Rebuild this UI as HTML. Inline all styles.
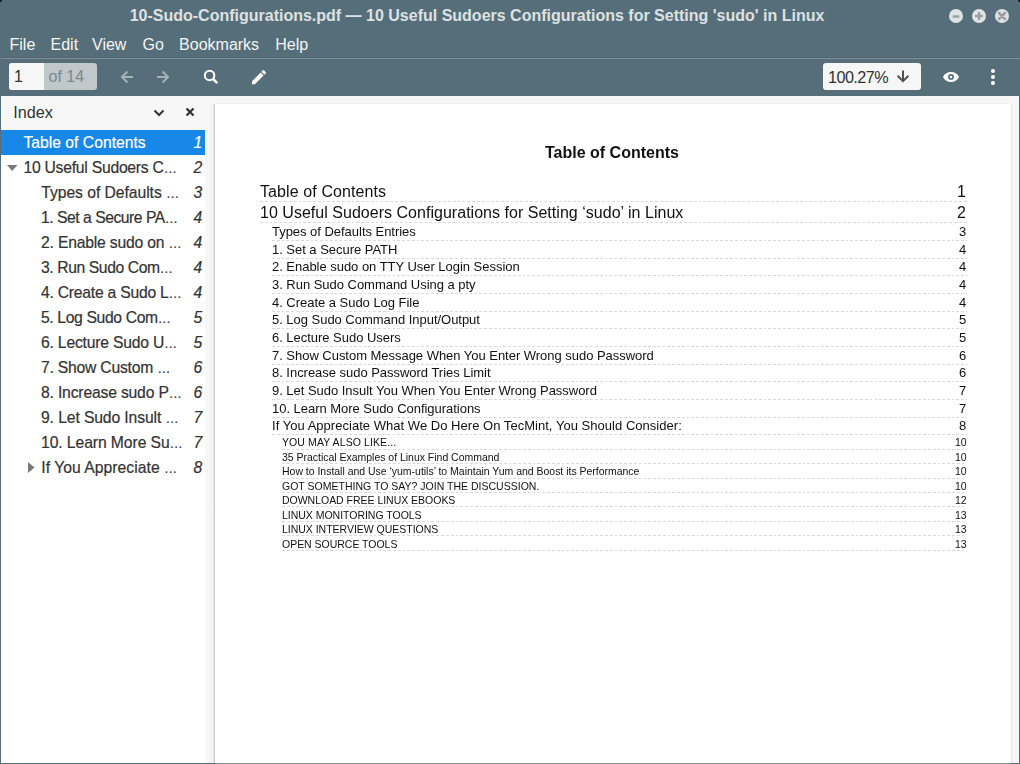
<!DOCTYPE html>
<html><head><meta charset="utf-8">
<style>
*{margin:0;padding:0;box-sizing:border-box}
html,body{width:1020px;height:764px;overflow:hidden}
body{background:#566e79;font-family:"Liberation Sans",sans-serif;position:relative}
.a{position:absolute;white-space:nowrap}
#title{left:0;width:954px;text-align:center;font-weight:bold;font-size:16px;color:#dde1e3;line-height:20px}
.wb{position:absolute;top:9px;width:14px;height:14px;border-radius:50%;background:#dfe2e4}
.wb svg{position:absolute;left:0;top:0}
.menu{font-size:16px;color:#f4f5f5;line-height:20px}
#sep{left:1px;top:58px;width:1018px;height:1px;background:#7d909a}
#sep0{left:1px;top:57px;width:1018px;height:1px;background:#4f646e}
#pe{left:9px;top:63px;width:88px;height:27px;border-radius:3px;background:#c0c8cb;overflow:hidden}
#pe1{left:0;top:0;width:35px;height:27px;background:#f6f6f6}
#zoom{left:823px;top:63px;width:98px;height:27px;border-radius:3px;background:#f6f6f6}
#side{left:1px;top:96px;width:204px;height:667px;background:#fff;overflow:hidden}
#shead{left:0;top:0;width:204px;height:34px;background:#f7f7f7}
#sel{left:0;top:34px;width:204px;height:25px;background:#1787e8}
.st{font-size:15.7px;line-height:20px;color:#333;-webkit-text-stroke:0.2px currentColor}
.sn{font-size:15.7px;line-height:20px;color:#333;font-style:italic;-webkit-text-stroke:0.2px currentColor}
#docbg{left:205px;top:96px;width:814px;height:667px;background:#f7f7f7}
#strip{left:205px;top:104px;width:9px;height:659px;background:linear-gradient(to right,#f9f9f9,#f1f1f1)}
#page{left:215px;top:104px;width:796px;height:659px;background:#fff;box-shadow:-1px 0 1px #c8c8c8, 1px 0 1px #e6e6e6}
.e{position:absolute;color:#111;white-space:nowrap;will-change:transform}
.d{position:absolute;height:1px;background:repeating-linear-gradient(to right,#dadada 0,#dadada 2.8px,transparent 2.8px,transparent 4.82px)}
</style></head><body>
<div class="a" id="title" style="top:6.06px">10-Sudo-Configurations.pdf — 10 Useful Sudoers Configurations for Setting 'sudo' in Linux</div>
<div class="wb" style="left:949px"><svg width="14" height="14" viewBox="0 0 14 14"><rect x="3.7" y="6.3" width="6.6" height="2.4" fill="#9c9fa1"/></svg></div>
<div class="wb" style="left:972px"><svg width="14" height="14" viewBox="0 0 14 14"><rect x="3.1" y="5.8" width="7.8" height="2.4" fill="#9c9fa1"/><rect x="5.8" y="3.1" width="2.4" height="7.8" fill="#9c9fa1"/></svg></div>
<div class="wb" style="left:995px"><svg width="14" height="14" viewBox="0 0 14 14"><path d="M4 4L10 10M10 4L4 10" stroke="#9c9fa1" stroke-width="2.6" stroke-linecap="round"/></svg></div>
<div class="a menu" style="left:9.5px;top:34.66px">File</div>
<div class="a menu" style="left:50.5px;top:34.66px">Edit</div>
<div class="a menu" style="left:92px;top:34.66px">View</div>
<div class="a menu" style="left:142.6px;top:34.66px">Go</div>
<div class="a menu" style="left:179.1px;top:34.66px">Bookmarks</div>
<div class="a menu" style="left:275.3px;top:34.66px">Help</div>
<div class="a" id="sep0"></div><div class="a" id="sep"></div>
<div class="a" style="left:-1px;top:-1px;width:3px;height:3px;border-radius:50%;background:#1a1a2a"></div><div class="a" style="left:1018px;top:-1px;width:3px;height:3px;border-radius:50%;background:#1a1a2a"></div>
<div class="a" id="pe"><div class="a" id="pe1"></div></div>
<div class="a" style="left:14px;top:67.26px;font-size:16px;line-height:20px;color:#333">1</div>
<div class="a" style="left:48.5px;top:67.26px;font-size:16px;line-height:20px;color:#7c878c">of 14</div>
<svg class="a" style="left:115px;top:65px" width="60" height="25" viewBox="115 65 60 25"><path d="M133 77H122.2M127.4 71.6L122 77L127.4 82.4M157 77H167.8M162.6 71.6L168 77L162.6 82.4" stroke="#a5b1b7" stroke-width="2.1" fill="none"/></svg>
<svg class="a" style="left:198px;top:65px" width="74" height="25" viewBox="198 65 74 25"><circle cx="209.6" cy="75.5" r="4.75" stroke="#fff" stroke-width="2.1" fill="none"/><path d="M212.8 78.7L217.3 83.2" stroke="#fff" stroke-width="2.4" fill="none"/><g transform="translate(249.66 67.76) scale(0.78)"><path d="M3 17.25V21h3.75L17.81 9.94l-3.75-3.750L3 17.25zM20.71 7.04c.39-.39.39-1.02 0-1.41l-2.34-2.34c-.39-.39-1.02-.39-1.41 0l-1.83 1.83 3.75 3.75 1.83-1.83z" fill="#fff"/></g></svg>
<div class="a" id="zoom"></div>
<div class="a" style="left:828px;top:66.99px;font-size:16.2px;line-height:20px;color:#333;letter-spacing:-0.55px">100.27%</div>
<svg class="a" style="left:890px;top:65px" width="130" height="25" viewBox="890 65 130 25"><path d="M903 70.5V81M897.6 75.8L903 81.2L908.4 75.8" stroke="#505050" stroke-width="2" fill="none"/><path d="M943 77C946 70.3 956 70.3 959 77C956 83.7 946 83.7 943 77Z" fill="#fff"/><circle cx="951" cy="76.9" r="2.1" stroke="#566e79" stroke-width="1.7" fill="none"/><circle cx="993" cy="71" r="2.05" fill="#fff"/><circle cx="993" cy="77" r="2.05" fill="#fff"/><circle cx="993" cy="83" r="2.05" fill="#fff"/></svg>
<div class="a" id="side"><div class="a" id="shead"></div><div class="a" style="left:12.2px;top:6.39px;font-size:16.2px;line-height:20px;color:#333">Index</div><svg class="a" style="left:151.5px;top:12.5px" width="12" height="8" viewBox="0 0 12 8"><path d="M1.5 1.5L6 6L10.5 1.5" stroke="#333" stroke-width="2" fill="none"/></svg><svg class="a" style="left:184px;top:11px" width="10" height="10" viewBox="0 0 10 10"><path d="M1.5 1.5L8.5 8.5M8.5 1.5L1.5 8.5" stroke="#333" stroke-width="2.2" fill="none"/></svg><div class="a" id="sel"></div><div class="a st" style="left:22.40px;top:36.96px;letter-spacing:0.013px;color:#fff">Table of Contents</div><div class="a sn" style="left:192.60px;top:36.96px;color:#fff">1</div><div class="a st" style="left:22.40px;top:61.96px;letter-spacing:-0.235px;color:#333">10 Useful Sudoers C<span style="font-size:13.2px;letter-spacing:0">…</span></div><div class="a sn" style="left:192.60px;top:61.96px;color:#333">2</div><div class="a st" style="left:40.30px;top:86.96px;letter-spacing:-0.048px;color:#333">Types of Defaults <span style="font-size:13.2px;letter-spacing:0">…</span></div><div class="a sn" style="left:192.60px;top:86.96px;color:#333">3</div><div class="a st" style="left:40.00px;top:111.96px;letter-spacing:-0.475px;color:#333">1. Set a Secure PA<span style="font-size:13.2px;letter-spacing:0">…</span></div><div class="a sn" style="left:192.60px;top:111.96px;color:#333">4</div><div class="a st" style="left:40.00px;top:136.96px;letter-spacing:-0.185px;color:#333">2. Enable sudo on <span style="font-size:13.2px;letter-spacing:0">…</span></div><div class="a sn" style="left:192.60px;top:136.96px;color:#333">4</div><div class="a st" style="left:40.00px;top:161.96px;letter-spacing:-0.399px;color:#333">3. Run Sudo Com<span style="font-size:13.2px;letter-spacing:0">…</span></div><div class="a sn" style="left:192.60px;top:161.96px;color:#333">4</div><div class="a st" style="left:40.00px;top:186.96px;letter-spacing:-0.233px;color:#333">4. Create a Sudo L<span style="font-size:13.2px;letter-spacing:0">…</span></div><div class="a sn" style="left:192.60px;top:186.96px;color:#333">4</div><div class="a st" style="left:40.00px;top:211.96px;letter-spacing:-0.359px;color:#333">5. Log Sudo Com<span style="font-size:13.2px;letter-spacing:0">…</span></div><div class="a sn" style="left:192.60px;top:211.96px;color:#333">5</div><div class="a st" style="left:40.00px;top:236.96px;letter-spacing:-0.197px;color:#333">6. Lecture Sudo U<span style="font-size:13.2px;letter-spacing:0">…</span></div><div class="a sn" style="left:192.60px;top:236.96px;color:#333">5</div><div class="a st" style="left:40.00px;top:261.96px;letter-spacing:-0.216px;color:#333">7. Show Custom <span style="font-size:13.2px;letter-spacing:0">…</span></div><div class="a sn" style="left:192.60px;top:261.96px;color:#333">6</div><div class="a st" style="left:40.00px;top:286.96px;letter-spacing:-0.173px;color:#333">8. Increase sudo P<span style="font-size:13.2px;letter-spacing:0">…</span></div><div class="a sn" style="left:192.60px;top:286.96px;color:#333">6</div><div class="a st" style="left:40.00px;top:311.96px;letter-spacing:-0.103px;color:#333">9. Let Sudo Insult <span style="font-size:13.2px;letter-spacing:0">…</span></div><div class="a sn" style="left:192.60px;top:311.96px;color:#333">7</div><div class="a st" style="left:40.00px;top:336.96px;letter-spacing:-0.078px;color:#333">10. Learn More Su<span style="font-size:13.2px;letter-spacing:0">…</span></div><div class="a sn" style="left:192.60px;top:336.96px;color:#333">7</div><div class="a st" style="left:40.30px;top:361.96px;letter-spacing:0.038px;color:#333">If You Appreciate <span style="font-size:13.2px;letter-spacing:0">…</span></div><div class="a sn" style="left:192.60px;top:361.96px;color:#333">8</div><svg class="a" style="left:5.6px;top:69.2px" width="11" height="7" viewBox="0 0 11 7"><path d="M0 0H10.4L5.2 6.1z" fill="#7a7a7a"/></svg><svg class="a" style="left:26.5px;top:365.5px" width="7" height="11" viewBox="0 0 7 11"><path d="M0 0V11L6.5 5.5z" fill="#7a7a7a"/></svg></div>
<div class="a" id="docbg"></div><div class="a" id="strip"></div>
<div class="a" id="page"></div>
<div class="e" style="left:545.30px;top:143.26px;font-size:16px;line-height:20px;font-weight:bold;letter-spacing:0px">Table of Contents</div>
<div class="e" style="left:259.60px;top:181.66px;font-size:16px;line-height:20px;letter-spacing:0.1px">Table of Contents</div>
<div class="e" style="left:956.60px;top:181.66px;font-size:16px;line-height:20px;letter-spacing:0px">1</div>
<div class="d" style="left:259.50px;top:201.00px;width:707.00px"></div>
<div class="e" style="left:259.60px;top:203.36px;font-size:16px;line-height:20px;letter-spacing:0.025px">10 Useful Sudoers Configurations for Setting ‘sudo’ in Linux</div>
<div class="e" style="left:956.60px;top:203.36px;font-size:16px;line-height:20px;letter-spacing:0px">2</div>
<div class="d" style="left:259.50px;top:222.00px;width:707.00px"></div>
<div class="e" style="left:272.30px;top:222.20px;font-size:13px;line-height:20px;letter-spacing:-0.03px">Types of Defaults Entries</div>
<div class="e" style="left:958.87px;top:222.20px;font-size:13px;line-height:20px;letter-spacing:0px">3</div>
<div class="d" style="left:272.00px;top:240.00px;width:694.50px"></div>
<div class="e" style="left:272.30px;top:239.84px;font-size:13px;line-height:20px;letter-spacing:-0.03px">1. Set a Secure PATH</div>
<div class="e" style="left:958.87px;top:239.84px;font-size:13px;line-height:20px;letter-spacing:0px">4</div>
<div class="d" style="left:272.00px;top:258.00px;width:694.50px"></div>
<div class="e" style="left:272.30px;top:257.48px;font-size:13px;line-height:20px;letter-spacing:-0.03px">2. Enable sudo on TTY User Login Session</div>
<div class="e" style="left:958.87px;top:257.48px;font-size:13px;line-height:20px;letter-spacing:0px">4</div>
<div class="d" style="left:272.00px;top:275.00px;width:694.50px"></div>
<div class="e" style="left:272.30px;top:275.12px;font-size:13px;line-height:20px;letter-spacing:-0.03px">3. Run Sudo Command Using a pty</div>
<div class="e" style="left:958.87px;top:275.12px;font-size:13px;line-height:20px;letter-spacing:0px">4</div>
<div class="d" style="left:272.00px;top:293.00px;width:694.50px"></div>
<div class="e" style="left:272.30px;top:292.76px;font-size:13px;line-height:20px;letter-spacing:-0.03px">4. Create a Sudo Log File</div>
<div class="e" style="left:958.87px;top:292.76px;font-size:13px;line-height:20px;letter-spacing:0px">4</div>
<div class="d" style="left:272.00px;top:311.00px;width:694.50px"></div>
<div class="e" style="left:272.30px;top:310.40px;font-size:13px;line-height:20px;letter-spacing:-0.03px">5. Log Sudo Command Input/Output</div>
<div class="e" style="left:958.87px;top:310.40px;font-size:13px;line-height:20px;letter-spacing:0px">5</div>
<div class="d" style="left:272.00px;top:328.00px;width:694.50px"></div>
<div class="e" style="left:272.30px;top:328.04px;font-size:13px;line-height:20px;letter-spacing:-0.03px">6. Lecture Sudo Users</div>
<div class="e" style="left:958.87px;top:328.04px;font-size:13px;line-height:20px;letter-spacing:0px">5</div>
<div class="d" style="left:272.00px;top:346.00px;width:694.50px"></div>
<div class="e" style="left:272.30px;top:345.68px;font-size:13px;line-height:20px;letter-spacing:-0.03px">7. Show Custom Message When You Enter Wrong sudo Password</div>
<div class="e" style="left:958.87px;top:345.68px;font-size:13px;line-height:20px;letter-spacing:0px">6</div>
<div class="d" style="left:272.00px;top:364.00px;width:694.50px"></div>
<div class="e" style="left:272.30px;top:363.32px;font-size:13px;line-height:20px;letter-spacing:-0.03px">8. Increase sudo Password Tries Limit</div>
<div class="e" style="left:958.87px;top:363.32px;font-size:13px;line-height:20px;letter-spacing:0px">6</div>
<div class="d" style="left:272.00px;top:381.00px;width:694.50px"></div>
<div class="e" style="left:272.30px;top:380.96px;font-size:13px;line-height:20px;letter-spacing:-0.03px">9. Let Sudo Insult You When You Enter Wrong Password</div>
<div class="e" style="left:958.87px;top:380.96px;font-size:13px;line-height:20px;letter-spacing:0px">7</div>
<div class="d" style="left:272.00px;top:399.00px;width:694.50px"></div>
<div class="e" style="left:272.30px;top:398.60px;font-size:13px;line-height:20px;letter-spacing:-0.03px">10. Learn More Sudo Configurations</div>
<div class="e" style="left:958.87px;top:398.60px;font-size:13px;line-height:20px;letter-spacing:0px">7</div>
<div class="d" style="left:272.00px;top:417.00px;width:694.50px"></div>
<div class="e" style="left:272.30px;top:416.24px;font-size:13px;line-height:20px;letter-spacing:0.03px">If You Appreciate What We Do Here On TecMint, You Should Consider:</div>
<div class="e" style="left:958.87px;top:416.24px;font-size:13px;line-height:20px;letter-spacing:0px">8</div>
<div class="d" style="left:272.00px;top:434.00px;width:694.50px"></div>
<div class="e" style="left:282.40px;top:432.16px;font-size:10.5px;line-height:20px;letter-spacing:0.1px">YOU MAY ALSO LIKE...</div>
<div class="e" style="left:954.72px;top:432.16px;font-size:10.5px;line-height:20px;letter-spacing:0px">10</div>
<div class="d" style="left:282.40px;top:449.00px;width:684.10px"></div>
<div class="e" style="left:282.40px;top:446.66px;font-size:10.5px;line-height:20px;letter-spacing:-0.02px">35 Practical Examples of Linux Find Command</div>
<div class="e" style="left:954.72px;top:446.66px;font-size:10.5px;line-height:20px;letter-spacing:0px">10</div>
<div class="d" style="left:282.40px;top:463.00px;width:684.10px"></div>
<div class="e" style="left:282.40px;top:461.16px;font-size:10.5px;line-height:20px;letter-spacing:-0.02px">How to Install and Use ‘yum-utils’ to Maintain Yum and Boost its Performance</div>
<div class="e" style="left:954.72px;top:461.16px;font-size:10.5px;line-height:20px;letter-spacing:0px">10</div>
<div class="d" style="left:282.40px;top:478.00px;width:684.10px"></div>
<div class="e" style="left:282.40px;top:475.66px;font-size:10.5px;line-height:20px;letter-spacing:0.01px">GOT SOMETHING TO SAY? JOIN THE DISCUSSION.</div>
<div class="e" style="left:954.72px;top:475.66px;font-size:10.5px;line-height:20px;letter-spacing:0px">10</div>
<div class="d" style="left:282.40px;top:492.00px;width:684.10px"></div>
<div class="e" style="left:282.40px;top:490.16px;font-size:10.5px;line-height:20px;letter-spacing:-0.02px">DOWNLOAD FREE LINUX EBOOKS</div>
<div class="e" style="left:954.72px;top:490.16px;font-size:10.5px;line-height:20px;letter-spacing:0px">12</div>
<div class="d" style="left:282.40px;top:506.00px;width:684.10px"></div>
<div class="e" style="left:282.40px;top:504.66px;font-size:10.5px;line-height:20px;letter-spacing:-0.02px">LINUX MONITORING TOOLS</div>
<div class="e" style="left:954.72px;top:504.66px;font-size:10.5px;line-height:20px;letter-spacing:0px">13</div>
<div class="d" style="left:282.40px;top:521.00px;width:684.10px"></div>
<div class="e" style="left:282.40px;top:519.16px;font-size:10.5px;line-height:20px;letter-spacing:-0.02px">LINUX INTERVIEW QUESTIONS</div>
<div class="e" style="left:954.72px;top:519.16px;font-size:10.5px;line-height:20px;letter-spacing:0px">13</div>
<div class="d" style="left:282.40px;top:535.00px;width:684.10px"></div>
<div class="e" style="left:282.40px;top:533.66px;font-size:10.5px;line-height:20px;letter-spacing:-0.02px">OPEN SOURCE TOOLS</div>
<div class="e" style="left:954.72px;top:533.66px;font-size:10.5px;line-height:20px;letter-spacing:0px">13</div>
<div class="d" style="left:282.40px;top:550.00px;width:684.10px"></div>
</body></html>
